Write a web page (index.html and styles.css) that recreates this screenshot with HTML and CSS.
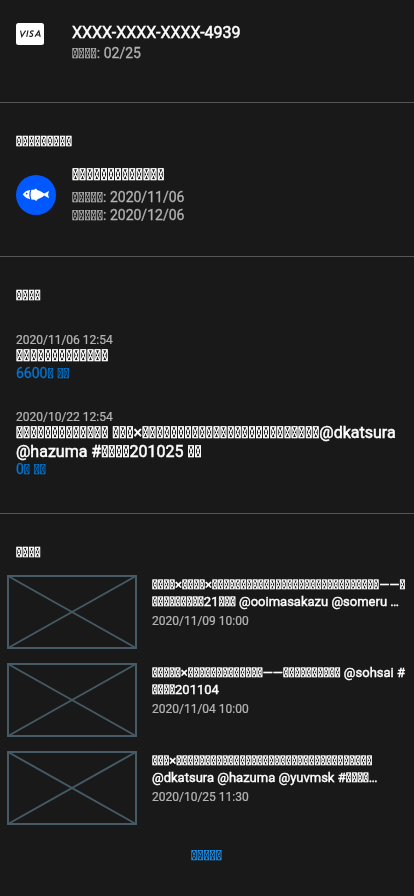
FILE: index.html
```html
<!DOCTYPE html>
<html lang="ja">
<head>
<meta charset="utf-8">
<meta name="viewport" content="width=device-width, initial-scale=1">
<title>Account</title>
<link rel="stylesheet" href="styles.css">
</head>
<body>
<main>
  <section class="section card">
    <div class="row">
      <svg class="visa" viewBox="0 0 28 22" aria-hidden="true">
        <rect width="28" height="22" rx="2.5" fill="#fff"/>
        <g fill="none" stroke="#1a1a1a" stroke-width="1.1">
          <path d="M4.6 7.6 5.8 13.6 9.6 7.6M12 7.4 10.7 13.8M17.8 8.2C16 7.5 14.4 7.8 14.4 9.2 14.6 10.6 17 10.7 16.7 12.1 16.5 13.5 14.5 13.7 13 13M18.9 13.8 22.8 7.9 24.2 13.8M20.3 12H23.7"/>
        </g>
      </svg>
      <div>
        <p class="name">XXXX-XXXX-XXXX-4939</p>
        <p class="detail">&#x3FFF0;&#x3FFF0;&#x3FFF0;&#x3FFF0;: 02/25</p>
      </div>
    </div>
  </section>

  <section class="section plan">
    <h2>&#x3FFF0;&#x3FFF0;&#x3FFF0;&#x3FFF0;&#x3FFF0;&#x3FFF0;&#x3FFF0;&#x3FFF0;&#x3FFF0;</h2>
    <div class="row">
      <svg class="avatar" viewBox="0 0 40 40" aria-hidden="true">
        <circle cx="20" cy="20" r="20" fill="#0059ff"/>
        <path fill="#fff" d="M6.8 19.3C8.5 16.8 11 15.2 14.2 14.9 13 18 13 21.2 14.2 24.2 11 23.6 8.3 22 6.8 19.3Z"/>
        <path fill="#fff" d="M15.4 14.8 18 14.7 20 13.6 21.3 14.9C24 15.6 26 17 28.2 18.6L33 15.9 32 19.5 33 23.2 28.2 20.6C26.2 22.2 24 23.6 21.3 24.4L20.3 26 18.5 24.8 15.4 24.5C14.3 21.5 14.3 18 15.4 14.8Z"/>
        <circle cx="10.7" cy="18.6" r="0.9" fill="#0059ff"/>
      </svg>
      <div>
        <p class="name">&#x3FFF0;&#x3FFF0;&#x3FFF0;&#x3FFF0;&#x3FFF0;&#x3FFF0;&#x3FFF0;&#x3FFF0;&#x3FFF0;&#x3FFF0;&#x3FFF0;&#x3FFF0;&#x3FFF0;</p>
        <p class="detail">&#x3FFF0;&#x3FFF0;&#x3FFF0;&#x3FFF0;&#x3FFF0;: 2020/11/06</p>
        <p class="detail">&#x3FFF0;&#x3FFF0;&#x3FFF0;&#x3FFF0;&#x3FFF0;: 2020/12/06</p>
      </div>
    </div>
  </section>

  <section class="section history">
    <h2>&#x3FFF0;&#x3FFF0;&#x3FFF0;&#x3FFF0;</h2>
    <article class="purchase">
      <time>2020/11/06 12:54</time>
      <p class="name">&#x3FFF0;&#x3FFF0;&#x3FFF0;&#x3FFF0;&#x3FFF0;&#x3FFF0;&#x3FFF0;&#x3FFF0;&#x3FFF0;&#x3FFF0;&#x3FFF0;&#x3FFF0;&#x3FFF0;</p>
      <p class="price">6600&#x3FFF0; &#x3FFF0;&#x3FFF0;</p>
    </article>
    <article class="purchase">
      <time>2020/10/22 12:54</time>
      <p class="name">&#x3FFF0;&#x3FFF0;&#x3FFF0;&#x3FFF0;&#x3FFF0;&#x3FFF0;&#x3FFF0;&#x3FFF0;&#x3FFF0;&#x3FFF0;&#x3FFF0;&#x3FFF0;&#x3FFF0; &#x3FFF0;&#x3FFF0;&#x3FFF0;×&#x3FFF0;&#x3FFF0;&#x3FFF0;&#x3FFF0;&#x3FFF0;&#x3FFF0;&#x3FFF0;&#x3FFF0;&#x3FFF0;&#x3FFF0;&#x3FFF0;&#x3FFF0;&#x3FFF0;&#x3FFF0;&#x3FFF0;&#x3FFF0;&#x3FFF0;&#x3FFF0;&#x3FFF0;&#x3FFF0;&#x3FFF0;&#x3FFF0;&#x3FFF0;&#x3FFF0;&#x3FFF0;@dkatsura @hazuma #&#x3FFF0;&#x3FFF0;&#x3FFF0;&#x3FFF0;201025 &#x3FFF0;&#x3FFF0;</p>
      <p class="price">0&#x3FFF0; &#x3FFF0;&#x3FFF0;</p>
    </article>
  </section>

  <section class="videos">
    <h2>&#x3FFF0;&#x3FFF0;&#x3FFF0;&#x3FFF0;</h2>
    <article class="video">
      <svg class="thumb" viewBox="0 0 130 74" aria-hidden="true"><path d="M1 1H129V73H1ZL129 73M129 1 1 73"/></svg>
      <div class="info">
        <h3>&#x3FFF0;&#x3FFF0;&#x3FFF0;&#x3FFF0;×&#x3FFF0;&#x3FFF0;&#x3FFF0;&#x3FFF0;×&#x3FFF0;&#x3FFF0;&#x3FFF0;&#x3FFF0;&#x3FFF0;&#x3FFF0;&#x3FFF0;&#x3FFF0;&#x3FFF0;&#x3FFF0;&#x3FFF0;&#x3FFF0;&#x3FFF0;&#x3FFF0;&#x3FFF0;&#x3FFF0;&#x3FFF0;&#x3FFF0;&#x3FFF0;&#x3FFF0;&#x3FFF0;&#x3FFF0;&#x3FFF0;&#x3FFF0;&#x3FFF0;&#x3FFF0;&#x3FFF0;&#x3FFF0;&#x3FFF0;——&#x3FFF0;&#x3FFF0;&#x3FFF0;&#x3FFF0;&#x3FFF0;&#x3FFF0;&#x3FFF0;&#x3FFF0;&#x3FFF0;&#x3FFF0;21&#x3FFF0;&#x3FFF0;&#x3FFF0; @ooimasakazu @someru …</h3>
        <time>2020/11/09 10:00</time>
      </div>
    </article>
    <article class="video">
      <svg class="thumb" viewBox="0 0 130 74" aria-hidden="true"><path d="M1 1H129V73H1ZL129 73M129 1 1 73"/></svg>
      <div class="info">
        <h3>&#x3FFF0;&#x3FFF0;&#x3FFF0;&#x3FFF0;&#x3FFF0;×&#x3FFF0;&#x3FFF0;&#x3FFF0;&#x3FFF0;&#x3FFF0;&#x3FFF0;&#x3FFF0;&#x3FFF0;&#x3FFF0;&#x3FFF0;&#x3FFF0;&#x3FFF0;&#x3FFF0;——&#x3FFF0;&#x3FFF0;&#x3FFF0;&#x3FFF0;&#x3FFF0;&#x3FFF0;&#x3FFF0;&#x3FFF0;&#x3FFF0;&#x3FFF0; @sohsai #&#x3FFF0;&#x3FFF0;&#x3FFF0;&#x3FFF0;201104</h3>
        <time>2020/11/04 10:00</time>
      </div>
    </article>
    <article class="video">
      <svg class="thumb" viewBox="0 0 130 74" aria-hidden="true"><path d="M1 1H129V73H1ZL129 73M129 1 1 73"/></svg>
      <div class="info">
        <h3>&#x3FFF0;&#x3FFF0;&#x3FFF0;×&#x3FFF0;&#x3FFF0;&#x3FFF0;&#x3FFF0;&#x3FFF0;&#x3FFF0;&#x3FFF0;&#x3FFF0;&#x3FFF0;&#x3FFF0;&#x3FFF0;&#x3FFF0;&#x3FFF0;&#x3FFF0;&#x3FFF0;&#x3FFF0;&#x3FFF0;&#x3FFF0;&#x3FFF0;&#x3FFF0;&#x3FFF0;&#x3FFF0;&#x3FFF0;&#x3FFF0;&#x3FFF0;&#x3FFF0;&#x3FFF0;&#x3FFF0;&#x3FFF0;&#x3FFF0;&#x3FFF0;&#x3FFF0;&#x3FFF0;&#x3FFF0; @dkatsura @hazuma @yuvmsk #&#x3FFF0;&#x3FFF0;&#x3FFF0;&#x3FFF0;…</h3>
        <time>2020/10/25 11:30</time>
      </div>
    </article>
    <a class="more" href="#">&#x3FFF0;&#x3FFF0;&#x3FFF0;&#x3FFF0;&#x3FFF0;</a>
  </section>
</main>
</body>
</html>
```
FILE: styles.css
```css
* { box-sizing: border-box; }
body {
  margin: 0;
  background: #191919;
  color: #fff;
  font-family: Roboto, sans-serif;
  font-size: 14px;
  line-height: 18px;
}
main { will-change: transform; }
h2, h3, p { margin: 0; }
h2, h3, .name { font-weight: 400; -webkit-text-stroke: 0.03em currentColor; }
.detail, time, .more, .price { -webkit-text-stroke: 0.02em currentColor; }
h2 { font-size: 14px; line-height: 18px; }
h3 { font-size: 13px; line-height: 17px; }
time { display: block; font-size: 12px; line-height: 14px; color: #b3b3b3; }
.section { padding: 0 16px; border-bottom: 1px solid #555; }
.row { display: grid; grid-template-columns: 40px 1fr; column-gap: 16px; }
.name { font-size: 16px; line-height: 19px; }
.detail { color: #b3b3b3; }

.card { padding-top: 23px; padding-bottom: 40px; }
.card .detail { margin-top: 2px; }
.visa { width: 28px; height: 22px; }

.plan { padding-top: 29px; padding-bottom: 32px; }
.plan .row { margin-top: 15px; align-items: center; }
.plan .name { margin-bottom: 4px; }
.avatar { width: 40px; height: 40px; }

.history { padding-top: 29px; padding-bottom: 36px; }
.purchase { margin-top: 30px; }
.purchase time { line-height: 12px; }
.price { color: #0078d7; line-height: 16px; }

.videos { padding: 29px 8px 32px 7px; }
.videos h2 { margin-left: 9px; margin-bottom: 14px; }
.video { display: flex; gap: 15px; margin-bottom: 14px; }
.thumb { flex: none; width: 130px; height: 74px; fill: none; stroke: #455a64; stroke-width: 2; }
.info { flex: 1; min-width: 0; padding-top: 1px; }
.info time { margin-top: 4px; }
.more { display: block; margin-top: 21px; text-align: center; color: #2196f3; text-decoration: none; }
```
